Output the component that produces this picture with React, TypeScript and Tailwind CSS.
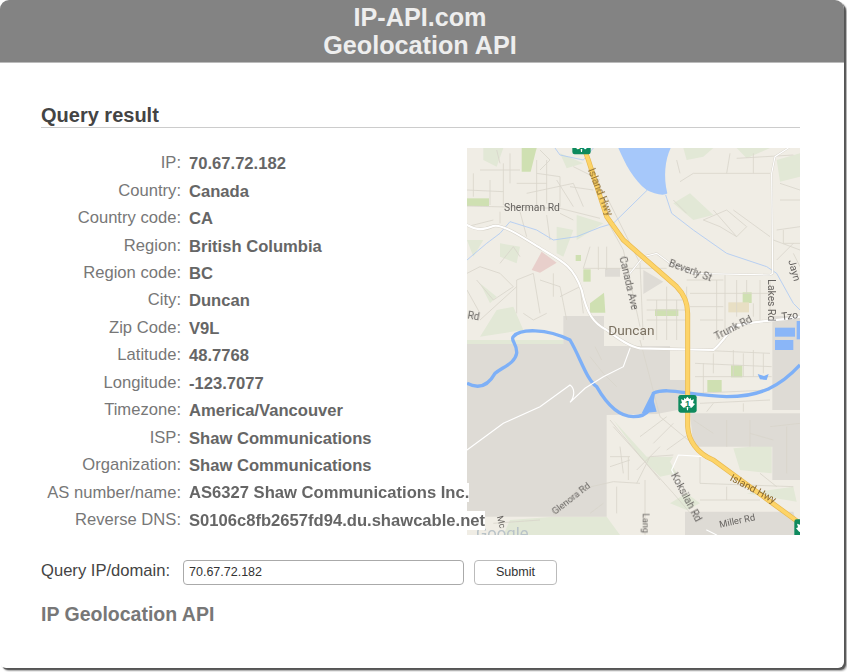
import React from 'react';

const rows = [
  ['IP:', '70.67.72.182'],
  ['Country:', 'Canada'],
  ['Country code:', 'CA'],
  ['Region:', 'British Columbia'],
  ['Region code:', 'BC'],
  ['City:', 'Duncan'],
  ['Zip Code:', 'V9L'],
  ['Latitude:', '48.7768'],
  ['Longitude:', '-123.7077'],
  ['Timezone:', 'America/Vancouver'],
  ['ISP:', 'Shaw Communications'],
  ['Organization:', 'Shaw Communications'],
  ['AS number/name:', 'AS6327 Shaw Communications Inc.'],
  ['Reverse DNS:', 'S0106c8fb2657fd94.du.shawcable.net'],
];

// coordinates are 3x page pixels, measured from (460,140)
const minorRoads = [
  'M21,198 L300,205 L420,235', 'M21,150 L130,155', 'M90,120 L90,195', 'M130,70 L130,195', 'M230,60 L230,200 M230,100 L300,110 L300,200',
  'M170,130 L260,130 M200,160 L340,130 L370,200', 'M660,125 L700,100 L930,100', 'M800,100 L810,40', 'M830,55 L1000,45',
  'M730,240 L800,210 L860,260 L830,290 L780,260 Z', 'M760,210 L830,290 M820,210 L930,290', 'M640,180 L680,220',
  'M950,270 L1020,260 M970,270 L970,310 L1020,310', 'M21,400 L60,380 L120,400 L160,440 L100,480 L50,420',
  'M170,520 L170,420 L220,400 L240,520', 'M300,470 L360,440 L370,520', 'M120,370 L160,320 L180,350',
  'M415,320 L415,390 M390,320 L370,385 M440,320 L440,390 M370,385 L620,385', 'M440,170 L540,370 L550,600',
  'M440,240 L490,330 L540,560', 'M560,480 L680,480 M560,510 L680,510 M560,540 L680,540 M590,480 L590,600 M620,440 L620,600 M650,480 L650,600',
  'M680,420 L790,420 M690,460 L930,460 M690,500 L790,500 M720,540 L790,540 M770,420 L770,600 M795,405 L795,600',
  'M705,630 L930,640 M705,670 L935,680 M705,710 L935,710 M820,630 L820,710 M880,630 L880,710 M730,670 L730,760 M705,760 L930,750',
  'M540,600 L600,830 L720,930 L760,960', 'M450,840 L600,1020 M460,860 L640,1060 L700,1130', 'M450,950 L510,950 M450,980 L510,960 M505,950 L505,1020',
  'M540,890 L620,830 M580,910 L640,850 M620,930 L690,880', 'M530,1030 L570,950 L640,945', 'M555,1020 L555,1185',
  'M280,1125 L350,1050 L460,1025 L540,1030', 'M720,950 L720,1030 L1000,1040 M720,1080 L900,1080 M800,1040 L800,1080 M900,1000 L950,1040',
  'M1020,330 L940,300', 'M800,840 L800,920 M870,840 L870,920', 'M390,650 L430,700 L470,740', 'M405,620 L425,660',
  'M40,100 L40,170 M60,90 L180,90 M150,40 L150,130 M260,60 L260,190 M290,120 L340,200 M330,140 L400,150 M340,80 L420,120',
  'M240,30 L270,60 L240,90 M110,30 L120,70 M21,260 L100,240 M300,220 L340,240 M120,215 L120,250 M180,215 L200,290 M260,225 L270,300',
  'M21,450 L60,520 M60,540 L170,440 M190,520 L220,540 L260,520 M240,420 L300,440 L320,540 M280,400 L280,470',
  'M680,440 L680,600 M830,420 L830,530 M860,420 L860,460 M880,490 L880,530 M900,420 L900,540 M930,420 L930,530',
  'M660,100 L650,60 M880,100 L880,40 M960,180 L1020,180 M960,130 L1020,150 M950,360 L1000,310 M1000,340 L1020,380',
  'M760,640 L760,700 M850,640 L850,710 M910,640 L910,700 M720,790 L930,780 M760,790 L740,815 M850,790 L850,815',
  'M700,840 L760,880 M930,860 L1020,850 M980,860 L980,1000 M870,880 L940,900',
  'M390,1120 L430,1090 M100,1150 L240,1140 M470,1040 L470,1120 M480,920 L490,1000 M530,990 L600,920',
];

function Shield({ x, y }: { x: number; y: number }) {
  return (
    <g transform={`translate(${x} ${y})`}>
      <rect width="55" height="53" rx="7" fill="#0e8a5e" />
      <path d="M27,5 L33,12 L38,9 L38,16 L47,13 L44,24 L50,27 L40,38 L30,36 L29,46 L26,46 L25,36 L15,38 L5,27 L11,24 L8,13 L17,16 L17,9 L22,12 Z" fill="#fff" />
      <text x="27.5" y="37" textAnchor="middle" fontSize="28" fontWeight="700" fill="#0e8a5e" fontFamily="'Liberation Sans', sans-serif">1</text>
    </g>
  );
}

function Label({ x, y, r = 0, size = 31, fill = '#666360', children }: { x: number; y: number; r?: number; size?: number; fill?: string; children: string }) {
  return (
    <text transform={`translate(${x} ${y}) rotate(${r})`} fontSize={size} fill={fill} fontFamily="Roboto, sans-serif">
      {children}
    </text>
  );
}

function MapView() {
  return (
    <svg viewBox="21 24 999 1161" className="block w-[333px] h-[387px] shrink-0">
      <rect x="21" y="24" width="999" height="1161" fill="#f0ede5" />
      <g className="blur-[0.5px]">
        {/* green patches */}
        <g fill="#e2e8d6">
          <path d="M70,24 L130,24 L110,80 L70,60 Z M300,40 L370,70 L320,85 Z M670,24 L760,24 L730,50 L680,60 Z M830,24 L930,24 L860,55 Z" />
          <path d="M950,60 L1020,40 L1020,110 L960,125 Z M640,190 L690,160 L760,225 L700,240 Z M21,300 L70,300 L40,350 Z M120,310 L180,320 L170,370 L120,350 Z" />
          <path d="M350,225 L430,250 L350,300 Z M290,260 L340,270 L310,350 L290,340 Z M60,430 L110,470 L90,490 Z M110,510 L160,500 L190,570 L60,590 Z" />
          <path d="M460,840 L560,950 L640,950 L600,1010 L540,950 Z M820,925 L935,915 L935,1000 L840,990 Z M630,1090 L680,1060 L720,1090 L680,1110 Z" />
          <path d="M150,1140 L280,1130 L440,1130 L480,1185 L130,1185 Z M590,970 L630,965 L650,1000 L600,1010 Z M860,1060 L1000,1040 L1010,1085 Z" />
          <rect x="21" y="600" width="290" height="12" />
        </g>
        <g fill="#cfe0b2">
          <path d="M185,24 L230,24 L212,95 L185,95 Z" />
          <rect x="21" y="175" width="66" height="23" />
          <rect x="370" y="388" width="22" height="37" />
          <path d="M390,490 L432,458 L436,518 L390,518 Z" />
          <rect x="585" y="508" width="70" height="20" />
          <rect x="347" y="345" width="16" height="18" />
          <rect x="848" y="457" width="27" height="32" />
          <rect x="813" y="676" width="34" height="36" />
          <rect x="742" y="720" width="43" height="36" />
          <path d="M128,848 L148,840 L156,860 L140,868 Z" />
        </g>
        <path d="M215,390 L245,335 L290,368 L240,398 Z" fill="#e8cfcb" />
        <rect x="805" y="487" width="62" height="30" fill="#e8dfc4" />
        {/* grey land */}
        <g fill="#dedbd5">
          <path d="M21,612 L310,612 L310,528 L432,528 L432,618 L630,618 L630,720 L680,720 L680,805 L590,822 L440,825 L440,1130 L21,1130 Z" />
          <path d="M690,820 L1020,820 L1020,1020 L937,1020 L937,920 L760,920 L700,920 Z" />
          <path d="M937,528 L1020,528 L1020,810 L937,810 Z" />
          <path d="M675,1115 L1000,1115 L1020,1185 L675,1185 Z" />
          <path d="M435,385 L480,385 L480,410 L435,410 Z M550,390 L610,425 L550,462 Z" />
        </g>
        {/* streets */}
        <g fill="none" stroke="#d8d4ca" strokeWidth="2.4">
          {minorRoads.map((d, i) => (
            <path key={i} d={d} />
          ))}
        </g>
        {/* water */}
        <g fill="#a6c8fa">
          <path d="M475,24 L632,24 C615,60 610,110 622,160 C610,170 580,160 560,150 C520,120 495,70 475,24 Z" />
          <rect x="945" y="563" width="60" height="27" fill="#8ab6f8" />
          <rect x="945" y="600" width="55" height="30" fill="#8ab6f8" />
          <rect x="1010" y="543" width="10" height="55" fill="#8ab6f8" />
          <path d="M893,702 L912,708 L926,702 L920,720 L900,718 Z" fill="#7eb0f7" />
          <path d="M545,820 L575,760 L590,815 Z" fill="#7eb0f7" />
        </g>
        <g fill="none" stroke="#a9c8f5" strokeWidth="2.4">
          <path d="M562,150 L460,250 L420,262 L350,290 L280,300 L230,270 L150,245 L120,280 L80,310 L21,360" />
          <path d="M617,165 L635,220 L700,270 L800,340 L920,380 L950,400 L1000,490 L1020,510" />
          <path d="M285,24 L300,45 L370,60 L400,24" />
        </g>
        <path
          d="M21,730 C50,745 80,745 105,700 C130,680 165,670 170,640 C172,610 150,600 160,590 C180,565 260,565 330,600 C360,650 380,720 410,740 C450,810 490,830 520,830 C570,830 575,800 580,760 C620,740 680,765 800,770 C900,770 960,740 1020,675"
          fill="none"
          stroke="#7eb0f7"
          strokeWidth="10"
        />
        {/* white roads */}
        <g fill="none" strokeLinecap="round">
          <path d="M21,255 C40,265 60,275 100,258 C130,250 200,300 250,330 C310,365 340,380 365,450 C380,520 400,550 440,570 C480,600 510,620 540,625 L760,630 C775,620 790,600 820,560 C870,540 960,545 1020,530" stroke="#d5d1c8" strokeWidth="9" />
          <path d="M21,255 C40,265 60,275 100,258 C130,250 200,300 250,330 C310,365 340,380 365,450 C380,520 400,550 440,570 C480,600 510,620 540,625 L760,630 C775,620 790,600 820,560 C870,540 960,545 1020,530" stroke="#fff" strokeWidth="6.5" />
          <path d="M510,625 L490,680 L430,710 L375,745 L330,787 C345,770 345,745 330,735 L240,800 L130,850 L21,930" stroke="#fff" strokeWidth="3.5" />
          <path d="M510,400 L550,350 L590,340 L630,370 L700,400 L930,405 L938,400 L935,100 L945,50 L985,24" stroke="#d5d1c8" strokeWidth="6" />
          <path d="M510,400 L550,350 L590,340 L630,370 L700,400 L930,405 L938,400 L935,100 L945,50 L985,24" stroke="#fff" strokeWidth="3.5" />
          <path d="M735,950 L655,945 L635,990 L660,1040 M740,1170 L770,1185" stroke="#fff" strokeWidth="3.5" />
        </g>
        {/* highway */}
        <g fill="none">
          <path d="M372,24 L385,60 L440,230 L490,300 L650,440 C675,465 683,490 683,520 L683,860 C685,900 710,940 760,960 L1020,1150" stroke="#e8b84f" strokeWidth="15" />
          <path d="M372,24 L385,60 L440,230 L490,300 L650,440 C675,465 683,490 683,520 L683,860 C685,900 710,940 760,960 L1020,1150" stroke="#fdd468" strokeWidth="11" />
        </g>
      </g>
      <Shield x={337} y={-10} />
      <Shield x={655} y={765} />
      <Shield x={1003} y={1138} />
      {/* labels */}
      <g className="blur-[0.3px]">
        <Label x={132} y={213}>Sherman Rd</Label>
        <Label x={383} y={90} r={68} fill="#8a6a30">Island Hwy</Label>
        <Label x={478} y={352} r={77}>Canada Ave</Label>
        <Label x={624} y={378} r={20}>Beverly St</Label>
        <Label x={924} y={418} r={90}>Lakes Rd</Label>
        <Label x={445} y={585} size={41} fill="#7a7060">Duncan</Label>
        <Label x={770} y={600} r={-27}>Trunk Rd</Label>
        <Label x={965} y={540} r={-6}>Tzo</Label>
        <Label x={985} y={362} r={75}>Jayn</Label>
        <Label x={21} y={535} r={10}>Rd</Label>
        <Label x={808} y={1020} r={28} fill="#8a6a30">Island Hwy</Label>
        <Label x={632} y={1005} r={62}>Koksilah Rd</Label>
        <Label x={285} y={1125} r={-38} size={28}>Glenora Rd</Label>
        <Label x={780} y={1163} r={-12} size={28}>Miller Rd</Label>
        <Label x={548} y={1120} r={90} size={27}>Lang</Label>
        <Label x={110} y={1130} r={75} size={27}>Mc</Label>
        <text x="48" y="1198" fontSize="50" fill="#b9c3c8" fontFamily="Roboto, sans-serif">Google</text>
      </g>
    </svg>
  );
}

export default function App() {
  return (
    <div className="h-[672px] bg-white font-['Liberation_Sans',Arial,sans-serif] overflow-hidden">
      <div className="w-[844px] h-[668px] rounded-t-[9px] rounded-b-[6px] bg-white shadow-[2px_2px_1px_#555,3px_3px_2px_#aaa] overflow-hidden">
        <header className="h-[63px] pr-[4px] bg-[#838383] border-b border-[#bbb] text-center text-[#eeeeee] text-[25.2px] font-bold leading-[27.5px] pt-[4px]">
          <div>IP-API.com</div>
          <div>Geolocation API</div>
        </header>
        <main className="pl-[41px] w-[800px]">
          <h2 className="mt-[39px] h-[25px] border-b border-[#ccc] box-content text-[20px] leading-[27px] font-bold text-[#444]">
            Query result
          </h2>
          <div className="flex mt-[20px] w-[759px]">
            <div className="w-[426px] shrink-0 pt-[2px]">
              {rows.map(([label, value]) => (
                <div key={label} className="flex h-[27.45px] items-center text-[16.6px] whitespace-nowrap">
                  <div className="w-[140px] shrink-0 text-right text-[#777]">{label}</div>
                  <div className="relative z-10 ml-[8px] shrink-0 bg-white leading-[19px] font-bold text-[#666]">{value}</div>
                </div>
              ))}
            </div>
            <MapView />
          </div>
          <div className="flex items-center mt-[24px] text-[#444]">
            <label className="w-[142px] pb-[3px] text-[16.6px] shrink-0">Query IP/domain:</label>
            <input
              defaultValue="70.67.72.182"
              className="w-[281px] h-[25px] px-[5px] pb-[1px] border border-[#aaa] rounded-[4px] text-[12.5px] text-[#333]"
            />
            <button className="ml-[10px] w-[83px] h-[25px] pb-[1px] border border-[#bbb] rounded-[4px] bg-white text-[12.6px] text-[#333]">
              Submit
            </button>
          </div>
          <h3 className="mt-[15px] text-[19.5px] leading-[24px] font-bold text-[#777]">IP Geolocation API</h3>
        </main>
      </div>
    </div>
  );
}
